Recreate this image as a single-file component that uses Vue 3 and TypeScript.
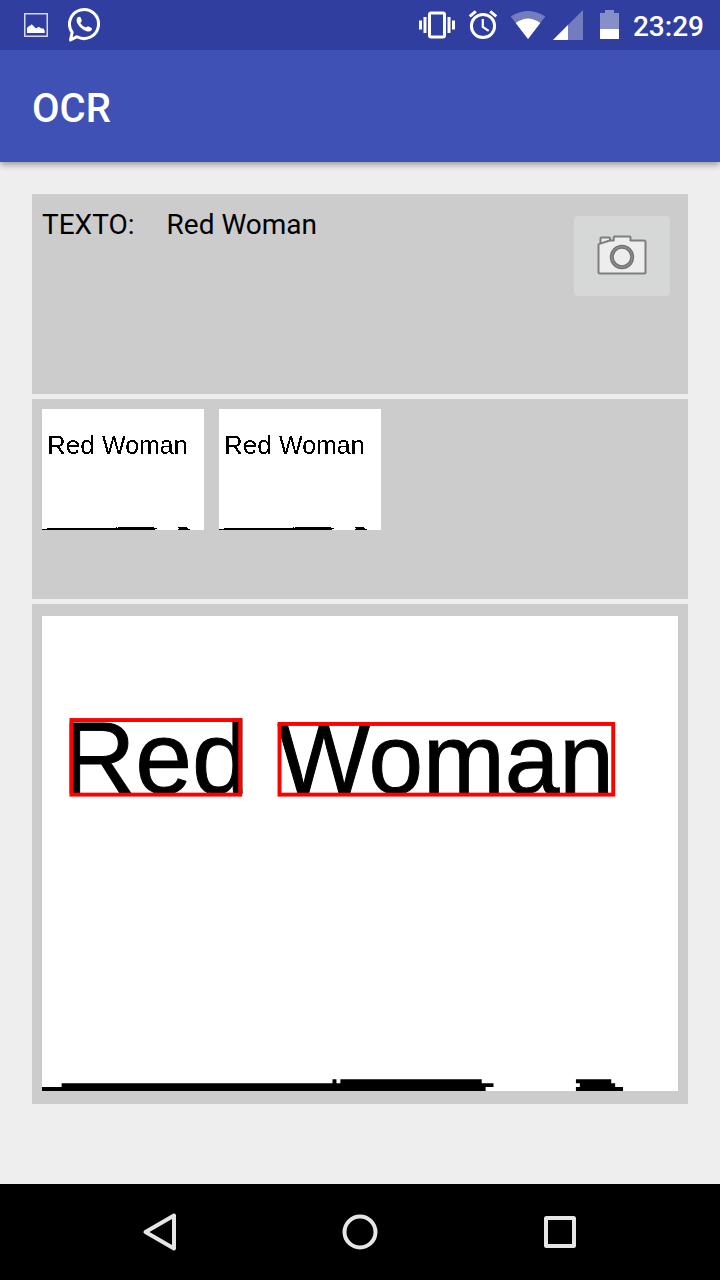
<script setup lang="ts">
interface Box {
  x: number
  y: number
  width: number
  height: number
}

interface Word {
  text: string
  x: number
  size: number
  box: Box
}

const words: Word[] = [
  { text: 'Red', x: 5, size: 26, box: { x: 7.5, y: 26.5, width: 43, height: 19 } },
  { text: 'Woman', x: 60, size: 25, box: { x: 60.5, y: 27.5, width: 85, height: 18 } },
]

const recognised = words.map((w) => w.text).join(' ')
const thumbnails = [1, 2]

// Dark rows along the bottom edge of the scanned page
const edge =
  'M0 120H5V119H74V118H75V119H76V118H112V119H115V120H113V121H0Z ' +
  'M136 118H145V119H146V120H148V121H136V120H137V119H136Z'
</script>

<template>
  <div class="screen">
    <div class="status">
      <svg class="picture-note" width="24" height="50" viewBox="0 0 24 50" aria-hidden="true">
        <rect x="0.75" y="13.75" width="22.5" height="22.5" fill="none" stroke="#fff" stroke-width="1.5" opacity="0.8" />
        <path d="M3 33V28L5 26L6.500 25.500L7.500 24.300L9 25.500L11.500 28L13 28L14.500 26.800L16 27.500L17.500 28.500H19.500L20.700 30.500V33Z" fill="#fff" />
      </svg>
      <svg width="34" height="50" viewBox="0 0 34 50" aria-hidden="true">
        <path d="M2.500 40L4.200 32.400A14.500 14.500 0 1 1 9 36.700Z" fill="none" stroke="#fff" stroke-width="3" stroke-linejoin="round" />
        <path d="M8.600 19.500Q9 17 11 16.800Q12.500 16.800 12.900 18L13.800 20.700Q13.700 21.500 12.300 22.900Q14 26 18 27.600Q19.300 26.300 20 26.200L23.600 28Q24.500 28.500 23.500 30.300Q21.500 32.300 18 31Q12.500 29 9.500 23.500Q8.400 21.500 8.600 19.500Z" fill="#fff" />
      </svg>
      <div class="indicators">
        <svg width="50" height="50" viewBox="0 0 50 50" fill="#fff" aria-hidden="true">
          <rect x="17.500" y="13" width="15" height="24" rx="1.500" fill="none" stroke="#fff" stroke-width="3" />
          <path d="M7 20.500H10V29.500H7ZM11.500 17H14.500V33H11.500ZM35.500 17H38.500V33H35.500ZM40 20.500H43V29.500H40Z" />
        </svg>
        <svg width="42" height="50" viewBox="0 0 42 50" fill="none" stroke="#fff" aria-hidden="true">
          <circle cx="21" cy="26" r="11.600" stroke-width="3" />
          <path d="M7.700 16.300L13.800 11.300M28.200 11.300L34.300 16.300" stroke-width="3" />
          <path d="M20.800 19V27L26.700 30.800" stroke-width="2.200" />
        </svg>
        <svg width="45" height="50" viewBox="0 0 45 50" fill="#fff" aria-hidden="true">
          <path d="M24 39L6.700 16.500Q24 5.500 41.300 16.500Z" opacity="0.32" />
          <path d="M24 39L11.700 23Q24 14 36.300 23Z" />
        </svg>
        <svg width="42" height="50" viewBox="0 0 42 50" fill="#fff" aria-hidden="true">
          <path d="M4 40H34V10Z" opacity="0.32" />
          <path d="M4 40H19V25Z" />
        </svg>
        <svg width="36" height="50" viewBox="0 0 36 50" fill="#fff" aria-hidden="true">
          <path d="M9 29V13H14V10H23V13H28V29Z" opacity="0.42" />
          <path d="M9 29H28V39H9Z" />
        </svg>
        <time class="clock">23:29</time>
      </div>
    </div>

    <header class="app-bar">
      <h1>OCR</h1>
    </header>

    <main class="content">
      <section class="panel result">
        <p class="line">
          <span>TEXTO:</span>
          <output>{{ recognised }}</output>
        </p>
        <button class="camera" type="button" aria-label="Camera">
          <svg width="96" height="80" viewBox="0 0 96 80" fill="#ededed" stroke="#7e7e7e" stroke-width="2" stroke-linejoin="round" aria-hidden="true">
            <path d="M26.500 28V22.500Q26.500 21.500 27.500 21.500H35Q36 21.500 36 22.500V25Z" />
            <path d="M26 57.500Q24.500 57.500 24.500 56V29Q24.500 28.200 25.500 27.900L35 24.800Q36 24.500 37 24.500H39.700V21.500Q39.700 20.500 40.700 20.500H55.500Q56.500 20.500 56.500 21.500V24.500H70Q71.500 24.500 71.500 26V56Q71.500 57.500 70 57.500Z" />
            <circle cx="48" cy="41" r="10.200" stroke="#727272" stroke-width="4" />
            <circle cx="48" cy="41" r="10.200" fill="none" stroke="#8b8b8b" stroke-width="1.500" />
          </svg>
        </button>
      </section>

      <section class="panel strip">
        <svg v-for="n in thumbnails" :key="n" class="thumb" viewBox="0 0 162 121" role="img" :aria-label="recognised">
          <defs>
            <filter :id="`ink-${n}`" x="0" y="0" width="1" height="1">
              <feComponentTransfer>
                <feFuncA type="discrete" tableValues="0 1" />
              </feComponentTransfer>
            </filter>
          </defs>
          <rect width="162" height="121" fill="#fff" />
          <g :filter="`url(#ink-${n})`">
            <text v-for="word in words" :key="word.text" class="scan-text" :x="word.x" y="45" :font-size="word.size">{{ word.text }}</text>
            <path :d="edge" />
          </g>
        </svg>
      </section>

      <section class="panel preview">
        <svg class="scan" viewBox="0 0 162 121" role="img" :aria-label="recognised">
          <rect width="162" height="121" fill="#fff" />
          <text v-for="word in words" :key="word.text" class="scan-text bold-ink" :x="word.x" y="45" :font-size="word.size">{{ word.text }}</text>
          <path :d="edge" />
          <rect v-for="word in words" :key="`${word.text}-box`" v-bind="word.box" fill="none" stroke="#f00" />
        </svg>
      </section>
    </main>

    <nav class="nav-bar" aria-label="System">
      <button type="button" aria-label="Back">
        <svg width="40" height="40" viewBox="0 0 40 40" aria-hidden="true"><path d="M5.500 20L34 3.500V36.500Z" /></svg>
      </button>
      <button type="button" aria-label="Home">
        <svg width="40" height="40" viewBox="0 0 40 40" aria-hidden="true"><circle cx="20" cy="20" r="15.500" /></svg>
      </button>
      <button type="button" aria-label="Recent apps">
        <svg width="40" height="40" viewBox="0 0 40 40" aria-hidden="true"><rect x="6" y="6" width="28" height="28" rx="0.500" /></svg>
      </button>
    </nav>
  </div>
</template>

<style>
body {
  margin: 0;
  background: #eee;
}
</style>

<style scoped>
.screen {
  display: flex;
  flex-direction: column;
  min-height: 100vh;
  background: #eee;
  color: #000;
  font-family: Roboto, "Noto Sans", sans-serif;
}

.screen svg {
  display: block;
}

.status {
  display: flex;
  position: relative;
  z-index: 1;
  align-items: center;
  height: 50px;
  padding: 0 16px 0 24px;
  background: #303f9f;
  color: #fff;
}

.picture-note {
  margin-right: 20px;
}

.indicators {
  display: flex;
  align-items: center;
  margin-left: auto;
}

.clock {
  margin: 3px 0 0 6px;
  font-size: 28px;
  font-weight: 500;
  line-height: 33px;
}

.app-bar {
  display: flex;
  align-items: center;
  height: 112px;
  padding: 0 32px;
  background: #3f51b5;
  color: #fff;
  box-shadow: 0 2px 7px rgba(0, 0, 0, 0.42);
}

.app-bar h1 {
  margin: 6px 0 0;
  font-size: 40px;
  font-weight: 500;
  line-height: 48px;
}

.content {
  display: flex;
  flex: 1;
  flex-direction: column;
  gap: 5px;
  padding: 32px;
}

.panel {
  display: flex;
  box-sizing: border-box;
  background: #ccc;
}

.result {
  align-items: flex-start;
  justify-content: space-between;
  min-height: 200px;
  padding: 14px 18px 10px 10px;
}

.line {
  display: flex;
  gap: 32px;
  margin: 0;
  font-size: 28px;
  line-height: 33px;
}

.camera {
  margin: 8px 0 0;
  padding: 0;
  border: 0;
  border-radius: 4px;
  background: #d6d7d7;
}

.strip {
  align-items: flex-start;
  gap: 15px;
  min-height: 200px;
  padding: 10px;
}

.thumb {
  width: 162px;
  shape-rendering: crispEdges;
}

.scan-text {
  font-family: "Liberation Sans", Arial, sans-serif;
}

.bold-ink {
  stroke: #000;
  stroke-width: 0.25;
}

.preview {
  padding: 12px 10px 13px;
}

.scan {
  width: 100%;
}

.nav-bar {
  display: grid;
  grid-template-columns: repeat(3, 1fr);
  height: 96px;
  padding: 0 60px;
  background: #000;
}

.nav-bar button {
  display: flex;
  align-items: center;
  justify-content: center;
  padding: 0;
  border: 0;
  background: none;
}

.nav-bar svg {
  fill: none;
  stroke: #e6e6e6;
  stroke-width: 4;
  stroke-linejoin: round;
}
</style>
